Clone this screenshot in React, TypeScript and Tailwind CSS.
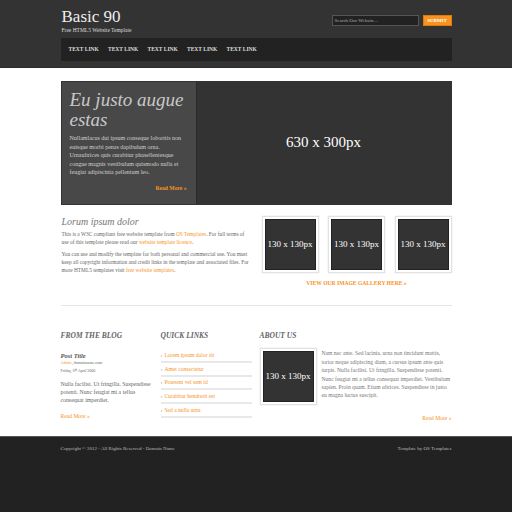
import React from "react";

const serif = { fontFamily: '"Liberation Serif", "DejaVu Serif", serif' };

function Thumb({ className = "" }: { className?: string }) {
  return (
    <div className={`p-[2px] bg-white border border-[#e2e2e2] shadow-[0_0_1px_#ccc] ${className}`}>
      <div className="w-[51px] h-[51px] bg-[#333] border border-[#222] flex items-center justify-center text-white text-[9px] whitespace-nowrap">
        130 x 130px
      </div>
    </div>
  );
}

export default function App() {
  const links = ["Lorem ipsum dolor sit", "Amet consectetur", "Praesent vel sem id", "Curabitur hendrerit est", "Sed a nulla urna"];
  return (
    <div className="w-[512px] h-[512px] bg-white overflow-hidden flex flex-col" style={serif}>
      {/* header */}
      <div className="bg-[#333] h-[68px] border-b border-[#2a2a2a] shrink-0">
        <div className="w-[391px] mx-auto">
          <div className="flex justify-between h-[38px]">
            <div className="pt-[7px] pl-[1px]">
              <div className="text-[17px] leading-[19px] text-[#eee]">Basic 90</div>
              <div className="text-[5.5px] leading-[7px] text-[#ddd] mt-[1px]">Free HTML5 Website Template</div>
            </div>
            <div className="pt-[15px] flex gap-[4px] items-start">
              <div className="w-[87px] h-[11px] bg-[#222] border border-[#555] text-[5px] leading-[9px] text-[#aaa] px-[2px]">Search Our Website...</div>
              <div className="w-[29px] h-[11px] bg-[#f7931e] border border-[#e07b0a] text-[5px] leading-[9px] text-white font-bold text-center">SUBMIT</div>
            </div>
          </div>
          <div className="h-[23px] bg-[#222] flex items-center pl-[8px] gap-[10px]">
            {["TEXT LINK", "TEXT LINK", "TEXT LINK", "TEXT LINK", "TEXT LINK"].map((t, i) => (
              <span key={i} className="text-[5.5px] text-[#ddd] font-bold w-[29.5px] whitespace-nowrap">{t}</span>
            ))}
          </div>
        </div>
      </div>

      {/* hero */}
      <div className="w-[391px] mx-auto mt-[13px] h-[124px] border border-[#333] flex shrink-0">
        <div className="w-[134px] bg-[#484848] px-[8px] pt-[8px] flex flex-col">
          <div className="text-[19px] leading-[20px] italic text-[#c8c8c8]">Eu justo augue estas</div>
          <p className="text-[6px] leading-[8.6px] text-[#d0d0d0] mt-[4px]">
            Nullamlacus dui ipsum conseque loborttis non euisque morbi penas dapibulum orna. Urnaultrices quis curabitur phasellentesque congue magnis vestibulum quismodo nulla et feugiat adipiscinia pellentum leo.
          </p>
          <div className="text-right text-[5.6px] font-bold text-[#f7931e] mt-[7px] pr-[1px]">Read More »</div>
        </div>
        <div className="flex-1 bg-[#333] border-l border-[#2a2a2a] flex items-center justify-center text-white text-[15px] pb-[2px]">
          630 x 300px
        </div>
      </div>

      {/* middle */}
      <div className="w-[391px] mx-auto mt-[11px] flex shrink-0">
        <div className="w-[191px] pl-[1px]">
          <div className="text-[10px] italic text-[#777] leading-[12px]">Lorum ipsum dolor</div>
          <p className="text-[5.4px] leading-[8px] text-[#666] mt-[2px]">
            This is a W3C compliant free website template from <span className="text-[#f7931e]">OS Templates</span>. For full terms of use of this template please read our <span className="text-[#f7931e]">website template licence</span>.
          </p>
          <p className="text-[5.4px] leading-[8px] text-[#666] mt-[4px]">
            You can use and modify the template for both personal and commercial use. You must keep all copyright information and credit links in the template and associated files. For more HTML5 templates visit <span className="text-[#f7931e]">free website templates</span>.
          </p>
        </div>
        <div className="flex-1 pl-[10px]">
          <div className="flex justify-between">
            <Thumb />
            <Thumb />
            <Thumb />
          </div>
          <div className="text-center text-[5.6px] font-bold text-[#f7931e] mt-[6px]">VIEW OUR IMAGE GALLERY HERE »</div>
        </div>
      </div>

      <div className="w-[391px] mx-auto mt-[18px] border-t border-[#e6e6e6] shrink-0" />

      {/* bottom columns */}
      <div className="w-[391px] mx-auto mt-[25px] flex shrink-0">
        <div className="w-[91px]">
          <div className="text-[7.5px] italic font-bold text-[#666] leading-[10px]">FROM THE BLOG</div>
          <div className="mt-[11px] text-[6.5px] italic font-bold text-[#555] leading-[8px]">Post Title</div>
          <div className="text-[4px] leading-[6px] text-[#666]"><span className="text-[#f7931e]">Admin</span>, domainname.com</div>
          <div className="text-[4px] leading-[6px] text-[#666] mt-[2px]">Friday, 6<sup className="text-[3px]">th</sup> April 2000</div>
          <p className="text-[5.8px] leading-[8px] text-[#666] mt-[6px]">Nulla facilisi. Ut fringilla. Suspendisse potenti. Nunc feugiat mi a tellus consequat imperdiet.</p>
          <div className="text-[5.6px] text-[#f7931e] mt-[8px]">Read More »</div>
        </div>
        <div className="w-[91px] ml-[9px]">
          <div className="text-[7.5px] italic font-bold text-[#666] leading-[10px]">QUICK LINKS</div>
          <ul className="mt-[8px]">
            {links.map((l) => (
              <li key={l} className="h-[13.7px] border-b-2 border-[#e8e8e8] flex items-center text-[5.6px] text-[#f7931e]">
                <span className="text-[#999] mr-[2px]">›</span>{l}
              </li>
            ))}
          </ul>
        </div>
        <div className="flex-1 ml-[8px]">
          <div className="text-[7.5px] italic font-bold text-[#666] leading-[10px]">ABOUT US</div>
          <div className="flex mt-[7px]">
            <Thumb className="shrink-0" />
            <p className="ml-[5px] text-[5.6px] leading-[8.4px] text-[#777] pt-[1px]">
              Nam nec ante. Sed lacinia, urna non tincidunt mattis, tortor neque adipiscing diam, a cursus ipsum ante quis turpis. Nulla facilisi. Ut fringilla. Suspendisse potenti. Nunc feugiat mi a tellus consequat imperdiet. Vestibulum sapien. Proin quam. Etiam ultrices. Suspendisse in justo eu magna luctus suscipit.
            </p>
          </div>
          <div className="text-right text-[5.6px] text-[#f7931e] mt-[9px]">Read More »</div>
        </div>
      </div>

      {/* footer */}
      <div className="mt-auto h-[76px] bg-[#222] border-t border-[#555] shrink-0">
        <div className="w-[391px] mx-auto flex justify-between pt-[8px] text-[5px] text-[#bbb]">
          <span>Copyright © 2012 - All Rights Reserved - Domain Name</span>
          <span>Template by OS Templates</span>
        </div>
      </div>
    </div>
  );
}
